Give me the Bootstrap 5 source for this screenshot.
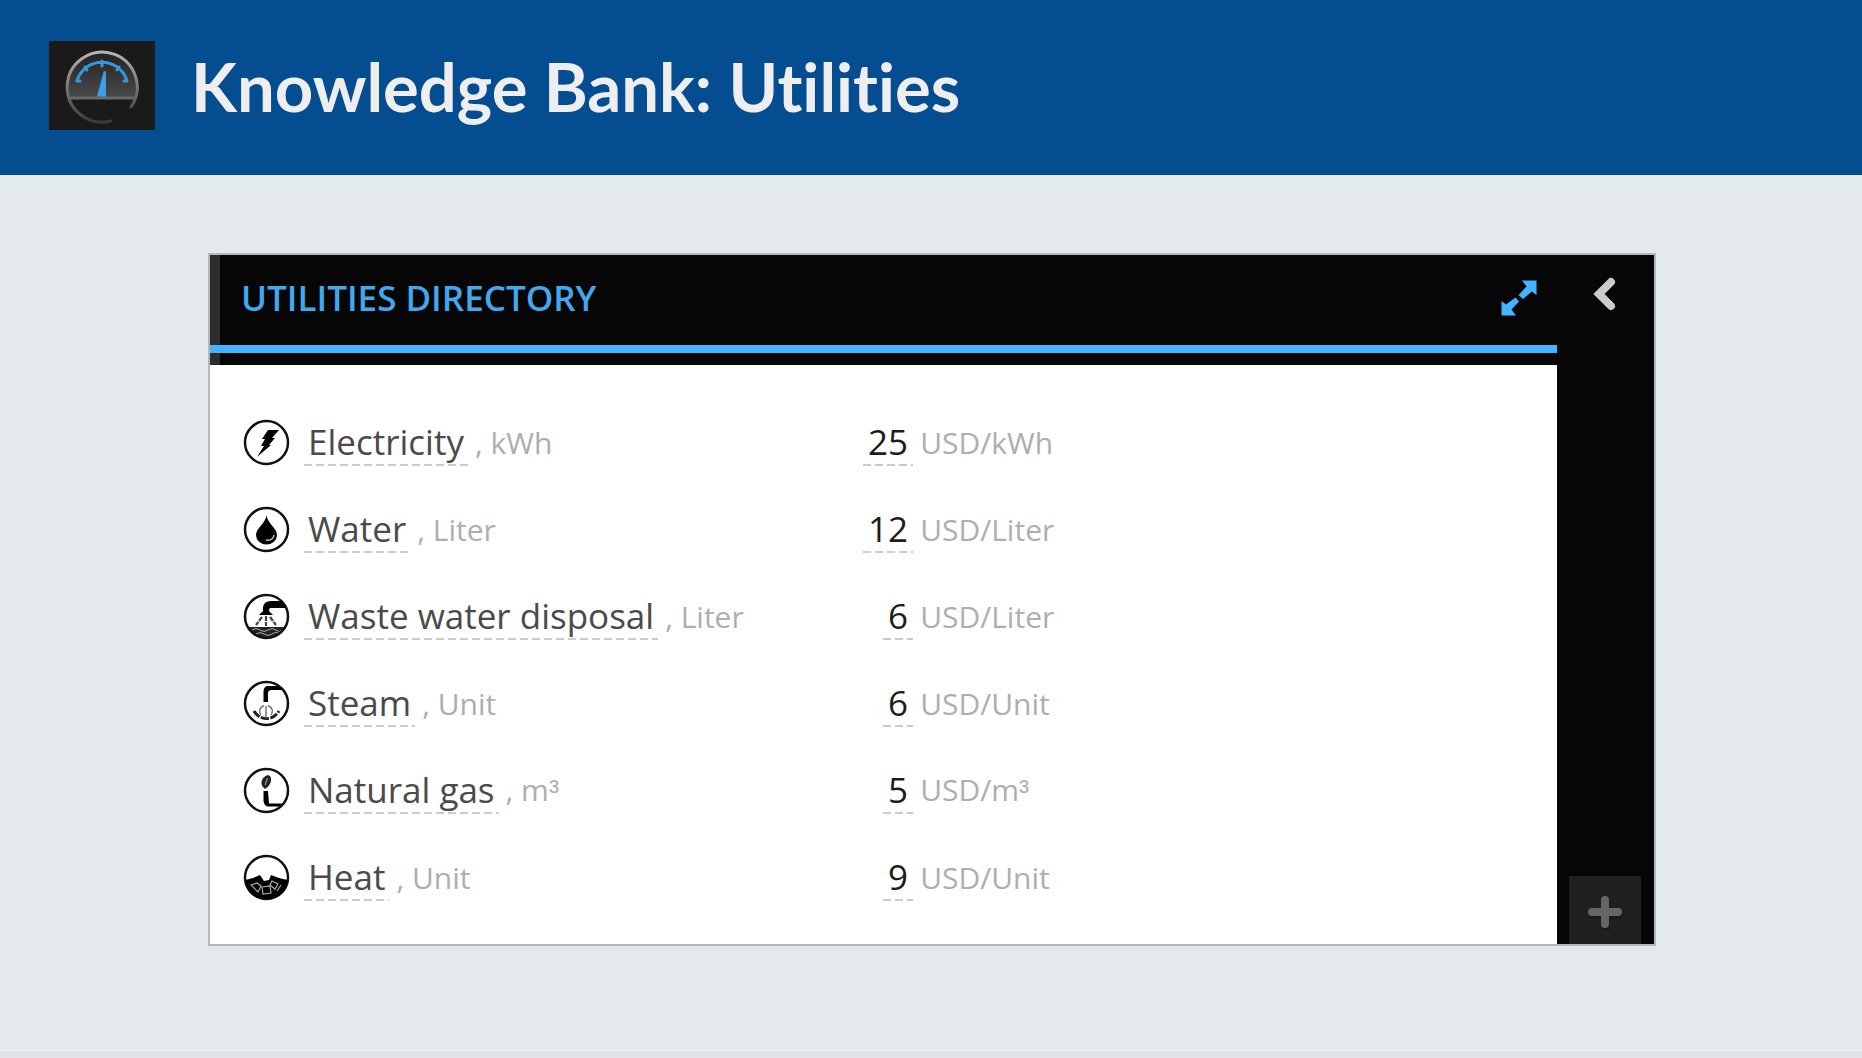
<!DOCTYPE html>
<html lang="en">
<head>
<meta charset="utf-8">
<meta name="viewport" content="width=device-width, initial-scale=1">
<title>Knowledge Bank: Utilities</title>
<link href="https://cdn.jsdelivr.net/npm/bootstrap@5.3.0/dist/css/bootstrap.min.css" rel="stylesheet">
<style>
body { background: #e4e9ec; font-family: "Open Sans", "Noto Sans", sans-serif; }
.page-head { background: #044d91; padding: 41px 49px 45px; gap: 36px; }
.page-logo { width: 106px; height: 89px; background: #1a1a1a; }
.page-title { font-family: Lato, sans-serif; font-size: 67px; line-height: 80px; font-weight: 700; color: #eee; font-variant-ligatures: none; }
.page-main { padding: 78px 206px 78px 208px; }
.panel { border: 2px solid #b4b6b7; background: #060606; }
.panel-head { height: 110px; border-left: 10px solid #2c2c2c; padding: 0 20px 24px 21px; position: relative; }
.panel-head::after { content: ""; position: absolute; left: -10px; right: 0; bottom: 12px; height: 8px; background: #45b4ff; }
.panel-title { font-size: 35px; line-height: 44px; font-weight: 600; color: #42a8ee; }
.panel-body { padding: 34px 0 23px 33px; }
.side-rail { width: 97px; padding-right: 2px; }
.bare-btn { background: none; border: 0; padding: 0; line-height: 0; }
.back-btn { padding-top: 21px; }
.add-btn { background: #202020; width: 72px; height: 68px; padding-top: 4px; }
.rates td { height: 87px; padding: 0; vertical-align: middle; white-space: nowrap; }
.rates .c-name { width: 45%; }
.rates .c-value { width: 6%; }
.row-icon { width: 47px; height: 47px; margin-right: 14px; }
.edit-link { display: inline-block; font-size: 35px; line-height: 44px; padding: 0 4px 2px; color: #4a4a4a; text-decoration: none;
  background: repeating-linear-gradient(90deg, #ccc 0 8px, transparent 8px 12px) left bottom / 100% 2px no-repeat; }
.edit-value { color: #1c1c1c; font-weight: 500; padding: 0 5px 2px; }
.unit-text { font-size: 30px; line-height: 44px; color: #aeaeae; padding-left: 7px; }
.cube { font-family: "Liberation Sans", Arial, sans-serif; }
.page-foot { height: 8px; background: #e2e2e7; border-top: 1px solid #eeeff1; }
@media (max-width: 1200px) {
  .page-main { padding: 24px; }
  .page-title { font-size: 40px; line-height: 48px; }
}
</style>
</head>
<body class="d-flex flex-column min-vh-100">
<header class="page-head d-flex align-items-center">
  <svg class="page-logo flex-shrink-0" viewBox="0 0 106 89" role="img" aria-label="Utilities gauge">
    <defs>
      <linearGradient id="ring" x1="0" y1="0" x2="0" y2="1"><stop offset="0" stop-color="#b5b5b5"/><stop offset=".5" stop-color="#777"/><stop offset="1" stop-color="#3a3a3a"/></linearGradient>
      <linearGradient id="dial" x1="0" y1="0" x2="0" y2="1"><stop offset="0" stop-color="#222"/><stop offset="1" stop-color="#4a4a4a"/></linearGradient>
    </defs>
    <path d="M20 57A35 35 0 1 1 86 57Z" fill="url(#dial)"/>
    <path d="M62 80A35 35 0 1 1 82 66" fill="none" stroke="url(#ring)" stroke-width="3" stroke-linecap="round"/>
    <path d="M20 57H86" stroke="#686868" stroke-width="3"/>
    <path d="M31 40H28A26 26 0 0 1 78 40H75M53 20V25M36 26L38 29M70 26L68 29" fill="none" stroke="#3498db" stroke-width="3" stroke-linecap="round" stroke-linejoin="round"/>
    <path d="M48 55.500L54.500 31Q56 29 57 31V55.500Z" fill="#3a9fe8"/>
  </svg>
  <h1 class="page-title m-0">Knowledge Bank: Utilities</h1>
</header>

<main class="page-main flex-grow-1">
  <section class="panel d-flex">
    <div class="flex-grow-1">
      <div class="panel-head d-flex align-items-center justify-content-between">
        <h2 class="panel-title m-0">UTILITIES DIRECTORY</h2>
        <button class="bare-btn" type="button" aria-label="Expand">
          <svg width="36" height="36" viewBox="0 0 36 36" fill="#45b4ff"><path d="M21 0.500H35.500V15L30.800 11.500L22 19L17.500 15L25.500 6.500ZM0.500 21L5 24.500L14.500 17.500L18 21.500L10.500 29.500L15 35.500H0.500Z"/></svg>
        </button>
      </div>
      <div class="panel-body bg-white">
        <table class="rates w-100">
          <tbody>
            <tr>
              <td class="c-name"><div class="d-flex align-items-center"><svg class="row-icon" viewBox="0 0 47 47"><circle cx="23.500" cy="23.500" r="21.500" fill="none" stroke="#111" stroke-width="2.500"/><path d="M25 11H36L29 19H32L26 26H28L14 38L21 27H18L22 20H19Z"/></svg><a class="edit-link" href="#">Electricity</a><span class="unit-text">, kWh</span></div></td>
              <td class="c-value text-end"><a class="edit-link edit-value" href="#">25</a></td>
              <td><span class="unit-text">USD/kWh</span></td>
            </tr>
            <tr>
              <td class="c-name"><div class="d-flex align-items-center"><svg class="row-icon" viewBox="0 0 47 47"><circle cx="23.500" cy="23.500" r="21.500" fill="none" stroke="#111" stroke-width="2.500"/><path d="M23.500 9C24 17 34 22 34 29A10.500 9.500 0 0 1 13 29C13 22 23 17 23.500 9Z"/><path d="M23 34Q30 35 31 29" fill="none" stroke="#bbb" stroke-width="1.500"/></svg><a class="edit-link" href="#">Water</a><span class="unit-text">, Liter</span></div></td>
              <td class="c-value text-end"><a class="edit-link edit-value" href="#">12</a></td>
              <td><span class="unit-text">USD/Liter</span></td>
            </tr>
            <tr>
              <td class="c-name"><div class="d-flex align-items-center"><svg class="row-icon" viewBox="0 0 47 47"><path d="M5 34H42Q36 45 23.500 45T5 34Z" fill="#222"/><path d="M9 37Q13 34 17 37T25 37T33 37T39 37M13 41Q17 38 21 41T29 41T35 40" fill="none" stroke="#aaa" stroke-width="1"/><circle cx="23.500" cy="23.500" r="21.500" fill="none" stroke="#111" stroke-width="2.500"/><path d="M20 18V14Q21 8 28 8H39L43 15H28Q26 15 26 17V18L30 22H16Z"/><path d="M19 24L13 32M23 23V33M27 24L33 32" fill="none" stroke="#444" stroke-width="2.200" stroke-dasharray="5 1"/></svg><a class="edit-link" href="#">Waste water disposal</a><span class="unit-text">, Liter</span></div></td>
              <td class="c-value text-end"><a class="edit-link edit-value" href="#">6</a></td>
              <td><span class="unit-text">USD/Liter</span></td>
            </tr>
            <tr>
              <td class="c-name"><div class="d-flex align-items-center"><svg class="row-icon" viewBox="0 0 47 47"><circle cx="23.500" cy="23.500" r="21.500" fill="none" stroke="#111" stroke-width="2.500"/><path d="M20.500 22V11Q21 6 25 6H36L41 10H28Q25 10.500 25 13V22Z"/><path d="M11 31Q15 38 23 38.500T36 31" fill="none" stroke="#222" stroke-width="3" stroke-dasharray="8 1.500"/><path d="M23 38V26M18 35Q14 29 21 25.500M28 35Q32 29 25 25.500" fill="none" stroke="#777" stroke-width="1.500"/></svg><a class="edit-link" href="#">Steam</a><span class="unit-text">, Unit</span></div></td>
              <td class="c-value text-end"><a class="edit-link edit-value" href="#">6</a></td>
              <td><span class="unit-text">USD/Unit</span></td>
            </tr>
            <tr>
              <td class="c-name"><div class="d-flex align-items-center"><svg class="row-icon" viewBox="0 0 47 47"><circle cx="23.500" cy="23.500" r="21.500" fill="none" stroke="#111" stroke-width="2.500"/><path d="M25 8C30 9 29 18 22 22C16 18 18 10 25 8Z" fill="#222"/><path d="M24.500 11L22 18" stroke="#999" stroke-width="1.200"/><path d="M20.500 24H25L26 36.500H39L37 39.500H24Q21 38 20.500 34Z"/></svg><a class="edit-link" href="#">Natural gas</a><span class="unit-text">, m<span class="cube">³</span></span></div></td>
              <td class="c-value text-end"><a class="edit-link edit-value" href="#">5</a></td>
              <td><span class="unit-text">USD/m<span class="cube">³</span></span></td>
            </tr>
            <tr>
              <td class="c-name"><div class="d-flex align-items-center"><svg class="row-icon" viewBox="0 0 47 47"><circle cx="23.500" cy="23.500" r="21.500" fill="none" stroke="#111" stroke-width="2.500"/><path d="M2.500 26L10 24L17 21L21 27L26 26L28 21L36 24L44.500 26Q43 45 23.500 45T2.500 26Z"/><path d="M8 31L14 29L18 32L15 38ZM19 33L27 32L28 39L20 40ZM29 27L35 30L32 35L27 31ZM34 37L38 31" fill="none" stroke="#aaa" stroke-width="1.200"/></svg><a class="edit-link" href="#">Heat</a><span class="unit-text">, Unit</span></div></td>
              <td class="c-value text-end"><a class="edit-link edit-value" href="#">9</a></td>
              <td><span class="unit-text">USD/Unit</span></td>
            </tr>
          </tbody>
        </table>
      </div>
    </div>
    <aside class="side-rail flex-shrink-0 d-flex flex-column align-items-center justify-content-between">
      <button class="bare-btn back-btn" type="button" aria-label="Collapse">
        <svg width="24" height="36" viewBox="0 0 24 36"><path d="M18 6L6 18L18 30" fill="none" stroke="#ccc" stroke-width="8" stroke-linecap="round"/></svg>
      </button>
      <button class="bare-btn add-btn" type="button" aria-label="Add">
        <svg width="36" height="36" viewBox="0 0 36 36"><path d="M18 6V32M5 19H31" transform="translate(1 2)" stroke="#111" stroke-width="8" stroke-linecap="round" opacity=".5"/><path d="M18 6V30M5 18H31" stroke="#666" stroke-width="8" stroke-linecap="round"/></svg>
      </button>
    </aside>
  </section>
</main>
<footer class="page-foot"></footer>
<script src="https://cdn.jsdelivr.net/npm/bootstrap@5.3.0/dist/js/bootstrap.bundle.min.js"></script>
</body>
</html>
